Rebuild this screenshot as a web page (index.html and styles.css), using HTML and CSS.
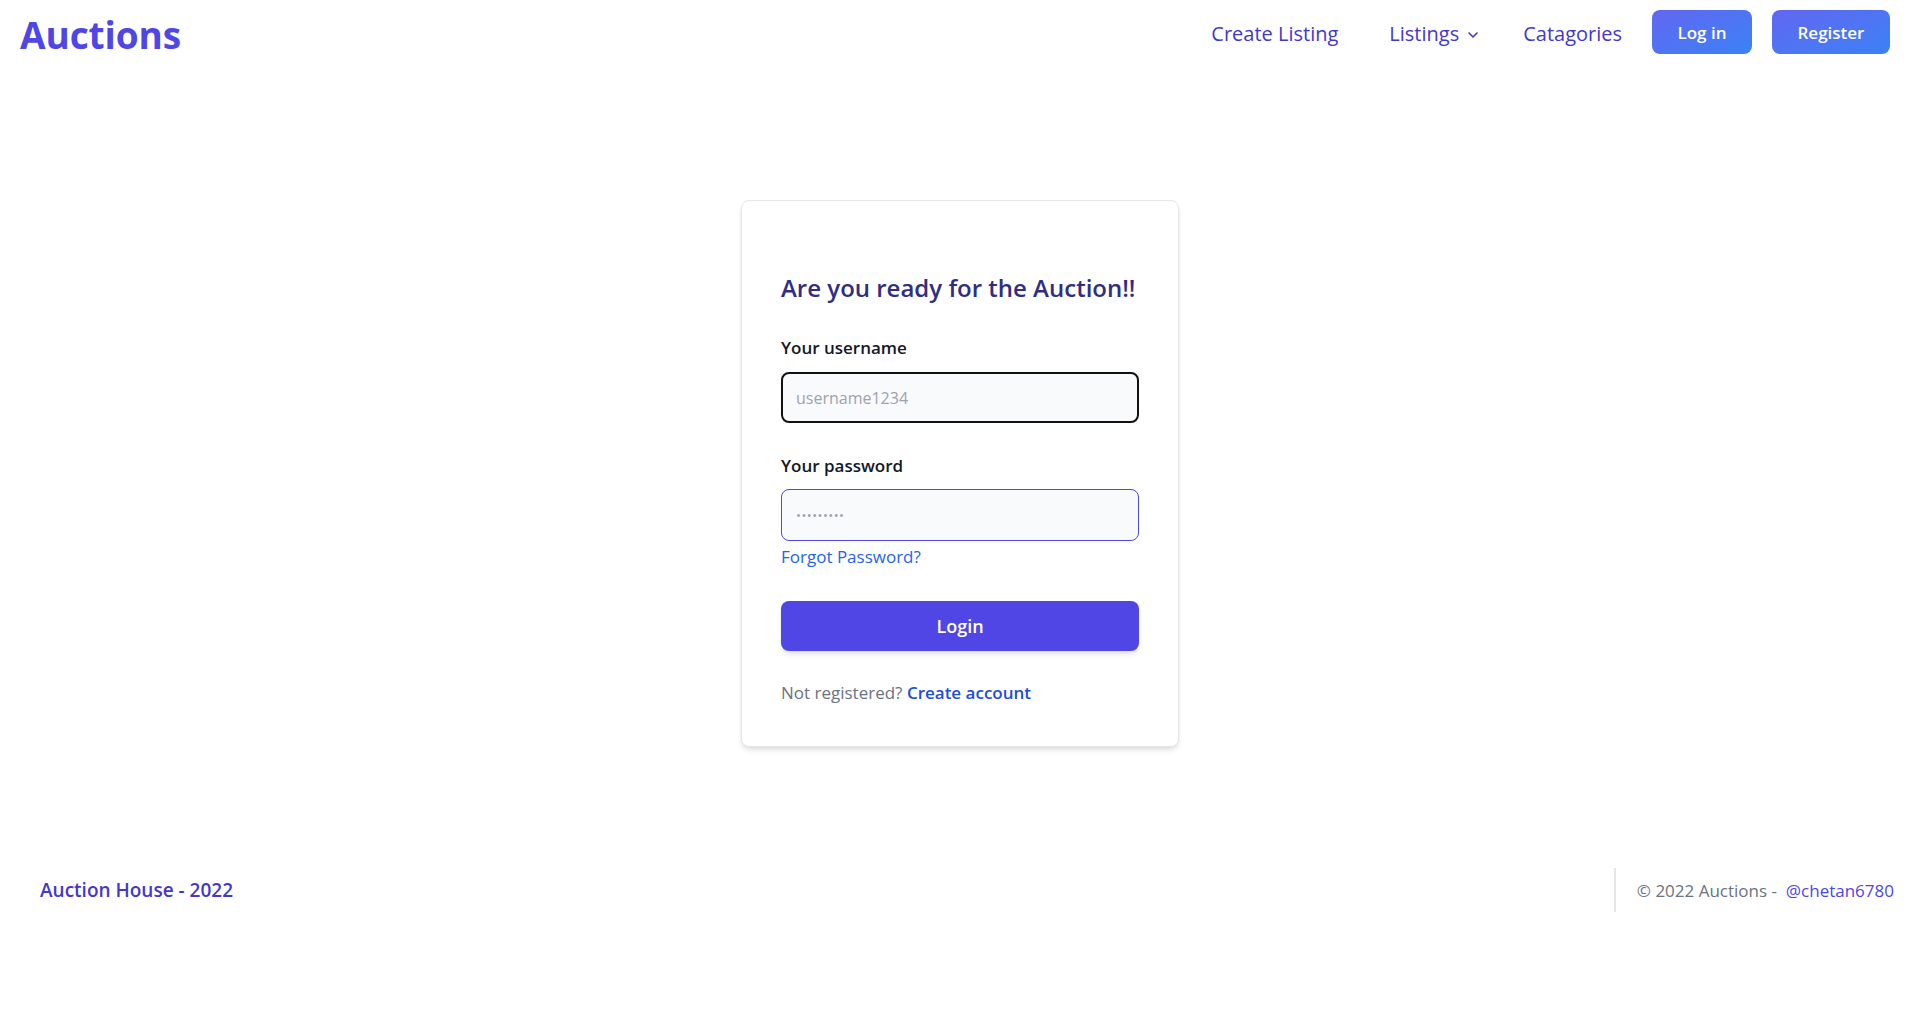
FILE: index.html
```html
<!DOCTYPE html>
<html lang="en">
<head>
<meta charset="utf-8">
<title>Auctions - Log in</title>
<link rel="stylesheet" href="styles.css">
</head>
<body>
<header class="topbar">
  <a class="logo" href="#">Auctions</a>
  <nav class="nav">
    <a class="nav-link create" href="#">Create Listing</a>
    <a class="nav-link listings" href="#">Listings
      <svg class="chev" width="10" height="6" viewBox="0 0 10 6" aria-hidden="true"><path d="M1 1 L5 5 L9 1" fill="none" stroke="#4338ca" stroke-width="1.6" stroke-linecap="round" stroke-linejoin="round"/></svg>
    </a>
    <a class="nav-link cats" href="#">Catagories</a>
    <a class="btn-grad login-btn" href="#">Log in</a>
    <a class="btn-grad register-btn" href="#">Register</a>
  </nav>
</header>

<main class="main">
  <form class="card">
    <h3 class="card-title">Are you ready for the Auction!!</h3>
    <label class="field-label" for="username">Your username</label>
    <input class="field focused" id="username" type="text" placeholder="username1234">
    <label class="field-label second" for="password">Your password</label>
    <input class="field pw" id="password" type="password" placeholder="•••••••••">
    <a class="forgot" href="#">Forgot Password?</a>
    <button class="submit" type="button">Login</button>
    <p class="signup">Not registered? <a href="#">Create account</a></p>
  </form>
</main>

<footer class="footer">
  <span class="foot-left">Auction House - 2022</span>
  <span class="foot-right">© 2022 Auctions - &nbsp;<a href="#">@chetan6780</a></span>
</footer>
</body>
</html>
```
FILE: styles.css
```css
* { box-sizing: border-box; }
html, body { margin: 0; padding: 0; background: #ffffff; }
body {
  font-family: "Open Sans", "Noto Sans", sans-serif;
  color: #111827;
}
a { text-decoration: none; }

.topbar {
  height: 64px;
  display: flex;
  align-items: center;
  justify-content: space-between;
  padding: 0 30px 0 20px;
}
.logo {
  font-size: 37px;
  line-height: 44px;
  font-weight: 700;
  color: #4f46e5;
  margin-top: 6px;
  letter-spacing: -0.1px;
}
.nav { display: flex; align-items: center; }
.nav-link {
  font-size: 20px;
  line-height: 28px;
  color: #4338ca;
  margin-top: 4px;
  display: flex;
  align-items: center;
}
.create { margin-right: 51px; }
.listings { margin-right: 45px; }
.chev { margin-left: 9px; margin-top: 2px; }
.cats { margin-right: 30px; }
.btn-grad {
  height: 44px;
  display: flex;
  align-items: center;
  justify-content: center;
  border-radius: 8px;
  background: linear-gradient(to bottom right, #6366f1, #3b82f6);
  color: #ffffff;
  font-size: 17px;
  font-weight: 600;
}
.login-btn { width: 100px; margin-right: 20px; }
.register-btn { width: 118px; }

.main {
  display: flex;
  justify-content: center;
  padding-top: 136px;
}
.card {
  width: 438px;
  height: 547px;
  border: 1px solid #e5e7eb;
  border-radius: 8px;
  background: #ffffff;
  box-shadow: 0 4px 6px -1px rgba(0,0,0,0.1), 0 2px 4px -2px rgba(0,0,0,0.1);
  padding: 71px 39px 0 39px;
  display: flex;
  flex-direction: column;
  margin: 0;
}
.card-title {
  margin: 0;
  font-size: 24px;
  line-height: 32px;
  font-weight: 600;
  color: #312e81;
  white-space: nowrap;
}
.field-label {
  display: block;
  margin-top: 32px;
  margin-bottom: 12px;
  font-size: 17px;
  line-height: 24px;
  font-weight: 600;
  color: #111827;
}
.field-label.second { margin-top: 31px; margin-bottom: 11px; }
.field {
  width: 100%;
  height: 51px;
  border-radius: 8px;
  background: #f9fafb;
  border: 1px solid #d1d5db;
  padding: 0 14px;
  font-family: inherit;
  font-size: 16px;
  color: #111827;
  outline: none;
}
.field.focused { border: 2px solid #111111; padding-left: 13px; }
.field.pw { border: 1px solid #4f46e5; height: 52px; font-size: 13px; letter-spacing: 0.5px; }
.field::placeholder { color: #9ca3af; }
.forgot {
  margin-top: 4px;
  font-size: 17px;
  line-height: 24px;
  color: #2563eb;
  align-self: flex-start;
}
.submit {
  margin-top: 32px;
  height: 50px;
  width: 100%;
  border: none;
  border-radius: 8px;
  background: #4f46e5;
  color: #ffffff;
  font-family: inherit;
  font-size: 18px;
  font-weight: 600;
  box-shadow: 0 4px 6px -1px rgba(0,0,0,0.1), 0 2px 4px -2px rgba(0,0,0,0.1);
}
.signup {
  margin: 30px 0 0 0;
  font-size: 17px;
  line-height: 24px;
  font-weight: 500;
  color: #6b7280;
}
.signup a { color: #1d4ed8; font-weight: 600; }

.footer {
  margin-top: 121px;
  height: 44px;
  display: flex;
  align-items: center;
  justify-content: space-between;
  padding: 0 26px 0 40px;
}
.foot-left {
  font-size: 19px;
  line-height: 26px;
  font-weight: 600;
  color: #4338ca;
}
.foot-right {
  height: 44px;
  display: flex;
  align-items: center;
  border-left: 2px solid #e5e7eb;
  padding-left: 21px;
  font-size: 17px;
  color: #6b7280;
  white-space: pre;
}
.foot-right a { color: #4f46e5; }
```
